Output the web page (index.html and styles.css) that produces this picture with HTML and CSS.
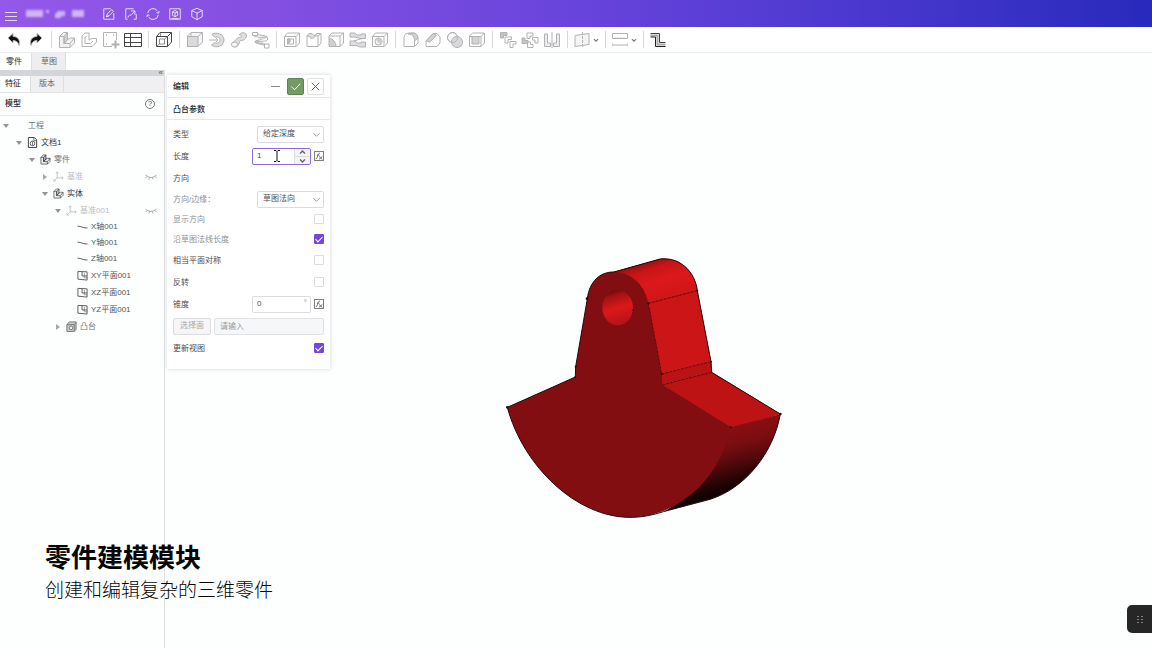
FILE: index.html
```html
<!DOCTYPE html>
<html lang="zh-CN">
<head>
<meta charset="utf-8">
<title>零件建模模块</title>
<link rel="stylesheet" href="styles.css">
</head>
<body>
<svg class="defs" aria-hidden="true">
  <symbol id="undo" viewBox="0 0 18 18"><path d="M3 7 8 2.500V5.500C13 5.500 15.500 9 14 14.500 13 11 11 9.500 8 9.500V12Z" fill="#111"/></symbol>
  <symbol id="redo" viewBox="0 0 18 18"><path d="M15 7 10 2.500V5.500C5 5.500 2.500 9 4 14.500 5 11 7 9.500 10 9.500V12Z" fill="#111"/></symbol>
  <symbol id="boss" viewBox="0 0 18 18"><path d="M1.500 5.500 5.500 1.500H9.500V8.500L12.500 7H16.500V12L12 16.500H1.500Z" fill="#f1f1f2"/><path d="M6 5.500 9.500 1.500V8.500L6 12.500Z" fill="#d2d2d4"/><path d="M1.500 5.500H6V12.500H12V16.500M6 12.500 9.500 8.500M12 12.500 16.500 7"/></symbol>
  <symbol id="sketch-l" viewBox="0 0 18 18"><path d="M2 5 5 2H9V9L12 7.500H16.500V11L12 15.500H2ZM5 6.500V12.500H10.500L13 10M5 6.500 6.500 5"/></symbol>
  <symbol id="add-sketch" viewBox="0 0 18 18"><path d="M10 15.500H1.500V1.500H14.500V9"/><path d="M4 4h1M11 4h1M4 13h1" stroke-width="1.500"/><path d="M13.500 9.500V17.500M9.500 13.500H17.500" stroke-width="2"/></symbol>
  <symbol id="grid" viewBox="0 0 18 18"><path d="M.5 2.500H17.500V15.500H.5ZM.5 6.500H17.500M.5 11.500H17.500M6.500 2.500V15.500"/></symbol>
  <symbol id="cube" viewBox="0 0 18 18"><path d="M1.500 5.500 5 1.500H16.500V11L12.500 15.500H1.500ZM1.500 5.500H12.500V15.500M12.500 5.500 16.500 1.500"/><path d="M4.500 8H9.500V13H4.500ZM5.500 2V5M2 15 4.500 13M9.500 8 12 6" stroke-width=".6"/></symbol>
  <symbol id="solid" viewBox="0 0 18 18"><path d="M1.500 5 5 1.500H16.500V11L12 15.500H1.500Z" fill="#f4f4f5"/><path d="M1.500 5.500H12V15.500H1.500Z" fill="#dadadc"/><path d="M12 5.500 16.500 1.500M5 1.500V5"/></symbol>
  <symbol id="revolve" viewBox="0 0 18 18"><path d="M4 3.500C8 .5 16 3 16 9S8 18 3.500 14L7 11.500C9 13 12 11.500 12 9S9 5 7.500 6.500Z" fill="#dedee0"/><path d="M1 9H10M8 7 10 9 8 11M4 3.500 7 2"/></symbol>
  <symbol id="sweep" viewBox="0 0 18 18"><path d="M9.500 4C10 1 16 1 16.500 4 16.500 8 14 9.500 10.500 9.500 9 10 9.500 16 5 16 1.500 16 1 12 3 11 6 10.500 6.500 6 9.500 6.500 12 7 12 4.500 9.500 4Z" fill="#dedee0"/><ellipse cx="4.500" cy="13.500" rx="3" ry="2.500" fill="#f8f8f8"/></symbol>
  <symbol id="helix" viewBox="0 0 18 18"><path d="M2 2.500C6 4.500 15 4 15.500 6.500S3 8.500 3 10.500 14 12 14.500 14.500M2 2.500V5C6 7 14 6 15.500 7.500M3 10.500C3 13.500 11 12.500 13 15" fill="#e4e4e6"/><path d="M.5 1.500H5.500V4.500H.5ZM12.500 13H17V17H12.500ZM15.500 6.500V9C14 11 6 9.500 3 11.500" fill="#fff"/></symbol>
  <symbol id="pocket" viewBox="0 0 18 18"><path d="M1.500 5.500 4.500 2H16.500V12L13 15.500H1.500ZM1.500 5.500H13V15.500M13 5.500 16.500 2M4.500 8H10.500V13H4.500Z"/><path d="M4.500 8H7V11L4.500 13Z" fill="#bbb"/></symbol>
  <symbol id="groove" viewBox="0 0 18 18"><path d="M4 2.500H7C8 5 11 4.500 12 2.500L10 5C9 8 5 8 4 5H2Z" fill="#dedee0"/><path d="M12 2.500H16V12L13 15.500H2V5M10 5H13V15.500M13 5 16 2.500"/></symbol>
  <symbol id="cut-sweep" viewBox="0 0 18 18"><path d="M2 7V5L5 2H16.500V12L13 15.500H9M2 5H13V15.500M13 5 16.500 2"/><path d="M2 7C6 8 9 11 9 15.500H2Z" fill="#cfcfd1"/></symbol>
  <symbol id="cut-helix" viewBox="0 0 18 18"><path d="M1 2H6L8 4H12V3H16.500V7.500H11L7 6H1ZM1 10H6L8 12H12V11H16.500V16H11L7 14.500H1Z" fill="#dedee0"/><path d="M13 7.500 5 10"/></symbol>
  <symbol id="hole" viewBox="0 0 18 18"><path d="M1.500 5.500 4.500 2H16.500V12L13 15.500H1.500ZM1.500 5.500H13V15.500M13 5.500 16.500 2"/><circle cx="7.500" cy="10.500" r="3.500" fill="#f4f4f5"/><path d="M5.500 7.500A3.500 3.500 0 0 1 10 13Q6 12 5.500 7.500" fill="#ccc" stroke="none"/></symbol>
  <symbol id="fillet" viewBox="0 0 18 18"><path d="M2 15.500V7C2 4 4 2 7 2H11C14 2 16 5 16 8V12L12.500 15.500Z"/><path d="M6 3C11 3 12.500 6 12.500 10L16 7C15.500 3 13 2 10 2Z" fill="#d2d2d4"/><path d="M12.500 10V15.500"/></symbol>
  <symbol id="chamfer" viewBox="0 0 18 18"><path d="M2 15.500V10L9 2.500H13L16 6V12L13 15.500Z"/><path d="M2 10 9 2.500 12.500 4 6 11Z" fill="#d2d2d4"/></symbol>
  <symbol id="boolean" viewBox="0 0 18 18"><circle cx="6.500" cy="6.500" r="5"/><circle cx="11" cy="11" r="5.500" fill="#d9d9db"/><circle cx="6.500" cy="6.500" r="5"/></symbol>
  <symbol id="shell" viewBox="0 0 18 18"><path d="M1.500 5 4.500 2H16.500V12L13 15.500H1.500ZM13 5.500 16.500 2M1.500 5.500H13V15.500"/><path d="M4 5.500H11V13H4Z" fill="#d2d2d4"/></symbol>
  <symbol id="linear-array" viewBox="0 0 18 18"><path d="M1.500 1.500H8V4.500H4.500V7H1.500Z" fill="#c4c4c6"/><path d="M6 6H12.500V8.500H9V12H6ZM11 10.500H17V13H14V16.500H11Z"/></symbol>
  <symbol id="polar-array" viewBox="0 0 18 18"><path d="M6 2H12V5H9V7.500H6ZM11.500 6.500H17V12H14V9H11.500ZM6.500 11H9.500V13.500H12V16.500H6.500Z"/><path d="M1 7H4V9.500H7V12.500H1Z" fill="#c4c4c6"/></symbol>
  <symbol id="mirror" viewBox="0 0 18 18"><path d="M1.500 3H4.500V12H7.500V15.500H1.500ZM16.500 3H13.500V12H10.500V15.500H16.500Z" fill="#ececee"/><path d="M9 1V17"/></symbol>
  <symbol id="plane" viewBox="0 0 18 18"><path d="M2 4.500 16 2.500V13.500L2 15.500Z" fill="#f4f4f5"/><path d="M9.500 1V17" stroke-dasharray="3 1"/></symbol>
  <symbol id="measure" viewBox="0 0 18 18"><path d="M1.500 2.500H16.500V7.500H1.500ZM2 14H16"/><path d="M4 6V7M7 6V7M10 6V7M13 6V7M1.500 12.500V15.500M16.500 12.500V15.500" stroke-width=".7"/></symbol>
  <symbol id="pipe" viewBox="0 0 18 18"><path d="M1.500 4.500H8.500V13.500H16.500" stroke="#aaa" stroke-width="2"/><path d="M1.500 2.500H10.500V11.500H16.500" stroke="#444"/><path d="M1.500 6H6.500V15.500H16.500" stroke="#222"/></symbol>
  <symbol id="down" viewBox="0 0 10 10"><path d="M1.500 3.500 5 7 8.500 3.500"/></symbol>
  <symbol id="doc" viewBox="0 0 12 12"><path d="M1.500.5H8L10.500 3V11.500H1.500Z"/><circle cx="6" cy="7" r="2.500" stroke-width=".8"/><path d="M6 5V9M7.500 1V4H10.500" stroke-width=".7"/></symbol>
  <symbol id="axes" viewBox="0 0 12 12"><path d="M4.500 1V7.500H11M4.500 7.500 1 11M3 2.500 4.500 1 6 2.500M9.500 6 11 7.500 9.500 9M1 9V11H3"/></symbol>
  <symbol id="axis" viewBox="0 0 12 12"><path d="M.5 4.500C4 4.500 8 7 11.500 6.500"/></symbol>
  <symbol id="datum" viewBox="0 0 12 12"><path d="M1 1.500 11 2V11L1 10ZM5.500 2V6.500H11"/><path d="M8 3V8.500H11" stroke-width=".6"/></symbol>
  <symbol id="feature" viewBox="0 0 12 12"><path d="M1 4 3.500 1H11V9L9 11.500H1Z" fill="#ccc"/><path d="M1 4H9V11M9 4 11 1.500"/><circle cx="5.500" cy="7.500" r="2" fill="#eee"/></symbol>
  <symbol id="closed-eye" viewBox="0 0 12 8"><path d="M.5 2Q6 7 11.500 2M2 3.500.5 5M4.500 4.500 4 6.500M7.500 4.500 8 6.500M10 3.500 11.500 5"/></symbol>
  <symbol id="fx" viewBox="0 0 12 12"><path d="M.5.5H11.500V11.500H.5ZM2 9.500C4.500 10 4 2.500 7 2.500M3.500 5H6.500M6 6.500 10 10M10 6.500 6 10"/></symbol>
</svg>

<header class="topbar">
  <button class="menu" aria-label="菜单"><i></i><i></i><i></i></button>
  <svg class="brand" viewBox="0 0 62 14" aria-hidden="true"><path d="M2 3H19V10H2ZM22 3h3v3h-3ZM31 11V7l3-3h7v5h-4v2ZM48 3H60V10H48Z"/></svg>
  <nav class="file-actions">
    <button aria-label="新建草图"><svg viewBox="0 0 16 16"><path d="M10 2H2V14H11M13.500 7V14H11M5 11 6 8 11 3 13 5 8 10ZM5 11 8 10"/></svg></button>
    <button aria-label="导出"><svg viewBox="0 0 16 16"><path d="M11 2H2V14H4M14 8V14H11M4.500 12C5 9 7 9 8 9.500L12.500 4.500M8 4.500H12.500V9"/></svg></button>
    <button aria-label="刷新"><svg viewBox="0 0 16 16"><path d="M2 7A6 6 0 0 1 13 4.500M14 9A6 6 0 0 1 3 11.500M12 6.500 14.500 7 15 4.500M4 9.500 1.500 9 1 11.500"/></svg></button>
    <button aria-label="快照"><svg viewBox="0 0 16 16"><path d="M2 2H14V14H2ZM8 4 11 5.500V9.500L8 11 5 9.500V5.500ZM5 5.500 8 7 11 5.500M8 7V11M4 13H12"/></svg></button>
    <button aria-label="模型"><svg viewBox="0 0 16 16"><path d="M8 1.500 14 4V11L8 14.500 2 11V4ZM2 4 8 7 14 4M8 7V14.500"/></svg></button>
  </nav>
</header>

<div class="toolbar" role="toolbar" aria-label="建模工具">
  <button aria-label="撤销"><svg><use href="#undo"/></svg></button>
  <button aria-label="重做"><svg><use href="#redo"/></svg></button>
  <span class="sep"></span>
  <button aria-label="凸台"><svg><use href="#boss"/></svg></button>
  <button aria-label="草图轮廓"><svg><use href="#sketch-l"/></svg></button>
  <button aria-label="添加草图"><svg><use href="#add-sketch"/></svg></button>
  <button class="on" aria-label="表格"><svg><use href="#grid"/></svg></button>
  <span class="sep"></span>
  <button class="on" aria-label="实体"><svg><use href="#cube"/></svg></button>
  <span class="sep"></span>
  <button aria-label="拉伸"><svg><use href="#solid"/></svg></button>
  <button aria-label="旋转"><svg><use href="#revolve"/></svg></button>
  <button aria-label="扫掠"><svg><use href="#sweep"/></svg></button>
  <button aria-label="螺旋"><svg><use href="#helix"/></svg></button>
  <span class="sep"></span>
  <button aria-label="拉伸切除"><svg><use href="#pocket"/></svg></button>
  <button aria-label="旋转切除"><svg><use href="#groove"/></svg></button>
  <button aria-label="扫掠切除"><svg><use href="#cut-sweep"/></svg></button>
  <button aria-label="螺旋切除"><svg><use href="#cut-helix"/></svg></button>
  <button aria-label="孔"><svg><use href="#hole"/></svg></button>
  <span class="sep"></span>
  <button aria-label="圆角"><svg><use href="#fillet"/></svg></button>
  <button aria-label="倒角"><svg><use href="#chamfer"/></svg></button>
  <button aria-label="布尔"><svg><use href="#boolean"/></svg></button>
  <button aria-label="抽壳"><svg><use href="#shell"/></svg></button>
  <span class="sep"></span>
  <button aria-label="线性阵列"><svg><use href="#linear-array"/></svg></button>
  <button aria-label="圆周阵列"><svg><use href="#polar-array"/></svg></button>
  <button aria-label="镜像"><svg><use href="#mirror"/></svg></button>
  <span class="sep"></span>
  <button class="split" aria-label="基准面"><svg><use href="#plane"/></svg></button>
  <button class="more" aria-label="更多基准"><svg><use href="#down"/></svg></button>
  <span class="sep"></span>
  <button class="split" aria-label="测量"><svg><use href="#measure"/></svg></button>
  <button class="more" aria-label="更多测量"><svg><use href="#down"/></svg></button>
  <span class="sep"></span>
  <button class="split" aria-label="管道"><svg><use href="#pipe"/></svg></button>
</div>

<nav class="tabs doc-tabs">
  <button class="tab">零件</button>
  <button class="tab idle">草图</button>
</nav>

<main class="workspace">
  <aside class="sidebar">
    <div class="collapse"><button aria-label="收起">«</button></div>
    <nav class="tabs side-tabs">
      <button class="tab">特征</button>
      <button class="tab idle">版本</button>
    </nav>
    <div class="side-head">
      <h2>模型</h2>
      <button class="help" aria-label="帮助">?</button>
    </div>
    <ul class="tree">
      <li>
        <div class="node"><i class="arrow"></i><span class="icon"></span><span>工程</span></div>
        <ul>
          <li>
            <div class="node strong"><i class="arrow"></i><svg class="icon"><use href="#doc"/></svg><span>文档1</span></div>
            <ul>
              <li>
                <div class="node"><i class="arrow"></i><svg class="icon dark"><use href="#boss"/></svg><span>零件</span></div>
                <ul>
                  <li><div class="node muted"><i class="arrow shut"></i><svg class="icon"><use href="#axes"/></svg><span>基准</span><svg class="eye"><use href="#closed-eye"/></svg></div></li>
                  <li>
                    <div class="node strong"><i class="arrow"></i><svg class="icon"><use href="#boss"/></svg><span>实体</span></div>
                    <ul>
                      <li>
                        <div class="node muted"><i class="arrow"></i><svg class="icon"><use href="#axes"/></svg><span>基准001</span><svg class="eye"><use href="#closed-eye"/></svg></div>
                        <ul>
                          <li><div class="node axis"><svg class="icon"><use href="#axis"/></svg><span>X轴001</span></div></li>
                          <li><div class="node axis"><svg class="icon"><use href="#axis"/></svg><span>Y轴001</span></div></li>
                          <li><div class="node axis"><svg class="icon"><use href="#axis"/></svg><span>Z轴001</span></div></li>
                          <li><div class="node leaf"><svg class="icon"><use href="#datum"/></svg><span>XY平面001</span></div></li>
                          <li><div class="node leaf"><svg class="icon"><use href="#datum"/></svg><span>XZ平面001</span></div></li>
                          <li><div class="node leaf"><svg class="icon"><use href="#datum"/></svg><span>YZ平面001</span></div></li>
                        </ul>
                      </li>
                      <li><div class="node"><i class="arrow shut"></i><svg class="icon"><use href="#feature"/></svg><span>凸台</span></div></li>
                    </ul>
                  </li>
                </ul>
              </li>
            </ul>
          </li>
        </ul>
      </li>
    </ul>
  </aside>

  <form class="panel">
    <div class="panel-head">
      <h2>编辑</h2>
      <button type="button" class="min" aria-label="最小化"></button>
      <button type="button" class="ok" aria-label="确定"><svg viewBox="0 0 16 16"><path d="M3.500 8 7 11.500 13 5"/></svg></button>
      <button type="button" class="close" aria-label="关闭"><svg viewBox="0 0 16 16"><path d="M4 4 12 12M12 4 4 12"/></svg></button>
    </div>
    <h3>凸台参数</h3>
    <div class="fields">
      <div class="row">
        <label for="kind">类型</label>
        <span class="pick"><select id="kind"><option>给定深度</option></select><svg><use href="#down"/></svg></span>
      </div>
      <div class="row">
        <label for="length">长度</label>
        <span class="num focus"><input id="length" type="text" value="1"><span class="spin"><button type="button" aria-label="增加"><svg class="up"><use href="#down"/></svg></button><button type="button" aria-label="减少"><svg><use href="#down"/></svg></button></span>
          <svg class="ibeam" viewBox="0 0 8 12"><path d="M1 .5H3L4 1.500 5 .5H7M4 1.500V10.500M1 11.500H3L4 10.500 5 11.500H7"/></svg></span>
        <button type="button" class="fx" aria-label="长度公式"><svg><use href="#fx"/></svg></button>
      </div>
      <div class="row"><span class="title">方向</span></div>
      <div class="row sub">
        <label for="edge">方向/边缘：</label>
        <span class="pick"><select id="edge"><option>草图法向</option></select><svg><use href="#down"/></svg></span>
      </div>
      <div class="row sub"><label for="show">显示方向</label><input id="show" type="checkbox"></div>
      <div class="row sub"><label for="normal">沿草图法线长度</label><input id="normal" type="checkbox" checked></div>
      <div class="row"><label for="sym">相当平面对称</label><input id="sym" type="checkbox"></div>
      <div class="row"><label for="rev">反转</label><input id="rev" type="checkbox"></div>
      <div class="row">
        <label for="taper">锥度</label>
        <span class="num"><input id="taper" type="text" value="0"><span class="unit">°</span></span>
        <button type="button" class="fx" aria-label="锥度公式"><svg><use href="#fx"/></svg></button>
      </div>
      <div class="row face">
        <button type="button" class="choose" disabled>选择面</button>
        <input class="face-name" type="text" placeholder="请输入" aria-label="选择面" disabled>
      </div>
      <div class="row"><label for="refresh">更新视图</label><input id="refresh" type="checkbox" checked></div>
    </div>
  </form>

  <section class="stage" aria-label="三维视图">
    <svg class="model" viewBox="0 0 930 870">
      <defs>
        <linearGradient id="rim" gradientUnits="userSpaceOnUse" x1="790" y1="540" x2="841" y2="729">
          <stop offset="0" stop-color="#8a0f12"/><stop offset=".3" stop-color="#780d10"/><stop offset=".55" stop-color="#52090b"/><stop offset=".78" stop-color="#2a0405"/><stop offset=".9" stop-color="#170202"/><stop offset="1" stop-color="#110202"/>
        </linearGradient>
        <linearGradient id="crown" gradientUnits="userSpaceOnUse" x1="460" y1="65" x2="500" y2="190">
          <stop offset="0" stop-color="#8f0f12"/><stop offset=".22" stop-color="#c81518"/><stop offset=".5" stop-color="#dc181b"/><stop offset="1" stop-color="#d01618"/>
        </linearGradient>
        <linearGradient id="bore" x1="0" y1="0" x2=".25" y2="1">
          <stop offset="0" stop-color="#4a0709"/><stop offset=".25" stop-color="#a41114"/><stop offset=".6" stop-color="#dc181b"/><stop offset="1" stop-color="#b81417"/>
        </linearGradient>
      </defs>
      <path fill="#8a0f12" d="M372 96 510 57C570 50 615 95 622 152L663 365 665 397 871 522 722 566 400 500Z"/>
      <path fill="url(#rim)" d="M715 562 722 562 871 522C850 640 765 745 660 778L520 815C600 775 680 680 715 562Z"/>
      <path fill="#bd1315" d="M517 435 665 397 871 522 722 562Z"/>
      <path fill="#cc1517" d="M475 190 622 152 663 365 665 397 517 435 515 402Z"/>
      <path fill="#b91315" d="M515 402 663 365 665 397 517 435Z"/>
      <path fill="url(#crown)" d="M360 98 510 57C570 50 615 95 622 152L475 190 400 170Z"/>
      <path fill="#820e11" d="M52 502 256 411 257 380 292 176C298 125 330 95 372 96 425 97 465 135 475 190L515 402 517 435 722 562C690 720 560 832 420 832 260 832 100 680 52 502Z"/>
      <ellipse cx="383" cy="203" rx="46" ry="53" fill="url(#bore)"/>
      <path class="edge" d="M520 815C480 828 450 832 420 832 260 832 100 680 52 502L256 411 257 380 292 176C298 125 330 95 372 96L510 57C570 50 615 95 622 152L663 365 665 397 871 522C850 640 765 745 660 778L520 815"/>
      <path class="edge dash" d="M475 190 622 152M515 402 663 365M517 435 665 397M475 190 515 402"/>
      <g class="dots"><circle cx="52" cy="502" r="4"/><circle cx="256" cy="411" r="3"/><circle cx="257" cy="380" r="3"/><circle cx="291" cy="176" r="4"/><circle cx="475" cy="190" r="3"/><circle cx="622" cy="152" r="3"/><circle cx="430" cy="210" r="3"/><circle cx="515" cy="402" r="3"/><circle cx="663" cy="365" r="3"/><circle cx="722" cy="562" r="3"/><circle cx="871" cy="522" r="4"/></g>
    </svg>
  </section>
</main>

<div class="caption">
  <h1>零件建模模块</h1>
  <p>创建和编辑复杂的三维零件</p>
</div>
<button class="dock" aria-label="工具面板"><i></i><i></i><i></i><i></i><i></i><i></i></button>
</body>
</html>
```
FILE: styles.css
```css
* { box-sizing: border-box; }
body {
  margin: 0;
  min-height: 100vh;
  display: flex;
  flex-direction: column;
  background: #fdfefe;
  color: #4c4c50;
  font: 8px/12px "Liberation Sans", "Noto Sans CJK SC", sans-serif;
}
h1, h2, h3, p, ul { margin: 0; padding: 0; }
button, input, select { font: inherit; color: inherit; margin: 0; }
button { padding: 0; border: 0; background: none; display: flex; align-items: center; justify-content: center; }
svg { display: block; fill: none; stroke: currentColor; }
ul { list-style: none; }
h2, h3 { font-size: 8px; font-weight: 500; color: #222; }
.defs { position: absolute; width: 0; height: 0; }

.topbar {
  height: 27px;
  display: flex;
  align-items: center;
  padding: 0 4px;
  background: linear-gradient(90deg, #9458ea 0, #8450e2 22%, #6844dc 50%, #4a38ce 75%, #282abc 100%);
  color: #f3ebff;
}
.menu { width: 14px; height: 20px; flex-direction: column; gap: 3px; margin-top: 6px; }
.menu i { width: 12px; height: 1px; background: #e5d5fb; }
.brand { width: 62px; height: 14px; margin: 0 12px 0 6px; fill: #d0b4f4; stroke: none; filter: blur(1px); }
.file-actions { display: flex; }
.file-actions button { width: 22px; height: 22px; }
.file-actions svg { width: 14px; height: 14px; }

.toolbar {
  height: 26px;
  display: flex;
  align-items: center;
  padding: 0 3px;
  background: #fff;
  border-bottom: 1px solid #ececee;
  color: #b2b2b4;
}
.toolbar button { width: 22px; height: 22px; }
.toolbar svg { width: 18px; height: 18px; }
.toolbar .on { color: #47474a; }
.toolbar .split { width: 19px; }
.toolbar .more { width: 10px; color: #777; }
.toolbar .more svg { width: 6px; height: 6px; stroke-width: 2; }
.sep { width: 1px; height: 17px; margin: 0 4px; background: #d6d6d9; }

.tabs { display: flex; }
.tab { padding: 0 7px; color: #333; }
.tab.idle { padding: 0 9px; background: #eeeef0; border: solid #dedee1; border-width: 0 1px; color: #666; }
.doc-tabs { height: 17px; }
.doc-tabs .tab { padding: 0 9px 0 6px; }
.doc-tabs .idle { padding: 0 8px 0 9px; }

.workspace { flex: 1; display: flex; align-items: flex-start; }
.sidebar { width: 165px; align-self: stretch; border-right: 1px solid #dfe0e2; }
.collapse { height: 6px; display: flex; justify-content: flex-end; background: #d4d5d9; padding-right: 1px; }
.collapse button { line-height: 6px; color: #555; }
.side-tabs { height: 17px; background: #f0f0f3; border-bottom: 1px solid #e2e2e5; }
.side-tabs .tab { background: #fdfefe; padding: 0 9px 0 5px; color: #222; }
.side-tabs .idle { background: none; padding: 0 8px; color: #666; }
.side-head { height: 23px; display: flex; align-items: center; justify-content: space-between; padding: 0 9px 0 5px; border-bottom: 1px solid #e6eaea; }
.help { width: 10px; height: 10px; border: 1px solid #777; border-radius: 50%; line-height: 8px; color: #555; }

.tree { padding-top: 1px; }
.tree ul { padding-left: 13px; }
.node { height: 17px; display: flex; align-items: center; color: #727275; }
.node.axis { height: 16px; padding-left: 12px; color: #555; }
.node.leaf { padding-left: 12px; color: #555; }
.node.strong { color: #333; }
.node.muted { color: #c0c0c3; }
.icon { width: 11px; height: 11px; margin-right: 3px; flex: none; }
.icon.dark { color: #222; }
.arrow { width: 12px; margin-right: 2px; display: flex; justify-content: center; }
.arrow::before { content: ""; border: 3px solid transparent; border-top: 4px solid #949497; border-bottom: 0; }
.arrow.shut::before { border: 3px solid transparent; border-left: 4px solid #a8a8ab; border-right: 0; }
.eye { width: 12px; height: 8px; margin: 0 7px 0 auto; color: #aaa; }

.panel { width: 163px; margin: 5px 0 0 2px; background: #fff; box-shadow: 0 0 4px #d4d5da; }
.panel-head { height: 23px; display: flex; align-items: center; gap: 3px; padding: 0 6px; border-bottom: 1px solid #e8e8eb; }
.panel-head h2 { margin-right: auto; padding-top: 2px; }
.panel-head button { width: 17px; height: 17px; border-radius: 2px; }
.panel-head svg { width: 15px; height: 15px; }
.min::before { content: ""; width: 9px; height: 1px; background: #888; }
.ok { background: #759a63; border: 1px solid #5c8450; color: #fff; }
.close { border: 1px solid #e0e0e3; color: #555; }
.panel h3 { height: 22px; line-height: 20px; padding: 2px 6px 0; border-bottom: 1px solid #e8e8eb; }
.fields { padding: 3px 6px 10px; }
.row { height: 22px; display: flex; align-items: center; gap: 3px; }
.row > :first-child { margin-right: auto; }
.row label, .row .title { padding-top: 2px; }
.row.sub { height: 20px; }
.row.sub label { color: #8f8f93; }
.pick { position: relative; width: 67px; }
.pick select { width: 100%; height: 17px; padding: 0 5px; border: 1px solid #dcdce0; border-radius: 2px; background: #fff; appearance: none; color: #4c4c50; }
.pick svg { position: absolute; right: 3px; top: 4px; width: 9px; height: 9px; color: #999; }
.num { position: relative; width: 59px; height: 17px; display: flex; border: 1px solid #dcdce0; border-radius: 2px; overflow: hidden; }
.num input { flex: 1; min-width: 0; border: 0; padding: 0 4px; background: none; outline: 0; }
.num.focus { border-color: #8b6cd8; }
.spin { width: 16px; display: flex; flex-direction: column; background: #f3f3f6; border-left: 1px solid #e2e2e6; }
.spin button { flex: 1; }
.spin button + button { border-top: 1px solid #dedee2; }
.spin svg { width: 7px; height: 7px; color: #666; stroke-width: 2; }
.spin .up { transform: rotate(180deg); }
.ibeam { position: absolute; left: 20px; top: 1px; width: 8px; height: 12px; color: #111; }
.unit { padding-right: 3px; color: #888; }
.fx { width: 10px; color: #555; }
.fx svg { width: 10px; height: 10px; }
input[type="checkbox"] { appearance: none; width: 10px; height: 10px; border: 1px solid #dcdce0; border-radius: 1px; background: #fff; display: flex; justify-content: center; }
input[type="checkbox"]:checked { background: #7446dc; border-color: #7446dc; }
input[type="checkbox"]:checked::before { content: ""; width: 3px; height: 6px; border: solid #fff; border-width: 0 1px 1px 0; transform: rotate(45deg); }
.row .choose { width: 38px; height: 17px; margin: 0; border: 1px solid #dcdce0; border-radius: 2px; background: #f6f6f8; color: #a8a8ac; }
.face-name { flex: 1; min-width: 0; height: 17px; padding: 0 5px; border: 1px solid #e0e1e4; border-radius: 2px; background: #f6f7f9; }
.face-name::placeholder { color: #99999d; opacity: 1; }

.stage { position: relative; flex: 1; align-self: stretch; }
.model { position: absolute; left: 160px; top: 170px; width: 310px; height: 290px; stroke: none; }
.edge { fill: none; stroke: #25080b; stroke-width: 3; stroke-linejoin: round; }
.edge.dash { stroke: #5e0a0d; stroke-dasharray: 8 4; }
.dots { fill: #1b1012; }

.caption { position: absolute; left: 45px; bottom: 44px; color: #050505; font-family: "Noto Sans CJK SC", sans-serif; }
.caption h1 { font-size: 26px; line-height: 36px; font-weight: 700; }
.caption p { font-size: 19px; line-height: 30px; font-weight: 300; }
.dock { position: absolute; right: 0; bottom: 15px; width: 25px; height: 28px; border-radius: 5px 0 0 5px; background: #262626; display: grid; grid-template-columns: 2px 2px; gap: 2px; place-content: center; }
.dock i { width: 2px; height: 1px; background: #85808c; }
```
